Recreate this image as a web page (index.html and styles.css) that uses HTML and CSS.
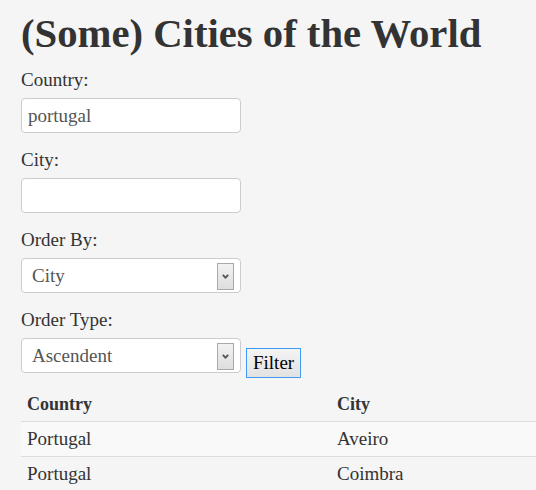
FILE: index.html
```html
<!DOCTYPE html>
<html lang="en">
<head>
<meta charset="utf-8">
<title>(Some) Cities of the World</title>
<link rel="stylesheet" href="styles.css">
</head>
<body>
<div class="page">
  <h1 class="title">(Some) Cities of the World</h1>
  <form class="filters">
    <div class="group">
      <label class="label" for="country">Country:</label>
      <input class="field" id="country" type="text" value="portugal">
    </div>
    <div class="group">
      <label class="label" for="city">City:</label>
      <input class="field" id="city" type="text" value="">
    </div>
    <div class="group">
      <label class="label" for="orderby">Order By:</label>
      <div class="select-wrap">
        <select class="select" id="orderby">
          <option>City</option>
          <option>Country</option>
        </select>
        <span class="arrow"><svg width="7" height="5" viewBox="0 0 7 5"><path d="M0.8 0.8 L3.5 3.6 L6.2 0.8" fill="none" stroke="#555" stroke-width="1.8"/></svg></span>
      </div>
    </div>
    <div class="group group-last">
      <label class="label" for="ordertype">Order Type:</label>
      <div class="inline-row">
        <div class="select-wrap">
          <select class="select" id="ordertype">
            <option>Ascendent</option>
            <option>Descendent</option>
          </select>
          <span class="arrow"><svg width="7" height="5" viewBox="0 0 7 5"><path d="M0.8 0.8 L3.5 3.6 L6.2 0.8" fill="none" stroke="#555" stroke-width="1.8"/></svg></span>
        </div>
        <button class="btn" type="button">Filter</button>
      </div>
    </div>
  </form>
  <table class="cities">
    <colgroup><col class="col-country"><col></colgroup>
    <thead>
      <tr><th>Country</th><th>City</th></tr>
    </thead>
    <tbody>
      <tr class="odd"><td>Portugal</td><td>Aveiro</td></tr>
      <tr><td>Portugal</td><td>Coimbra</td></tr>
    </tbody>
  </table>
</div>
</body>
</html>
```
FILE: styles.css
```css
html, body {
  margin: 0;
  padding: 0;
  background: #f5f5f5;
}
body {
  font-family: "Liberation Serif", "Times New Roman", serif;
  font-size: 19px;
  color: #333;
  overflow: hidden;
}
.page {
  padding: 0 0 0 21px;
}
.title {
  margin: 12px 0 12px;
  font-size: 40.7px;
  line-height: 44px;
  font-weight: bold;
  color: #333;
}
.filters {
  margin: 0;
}
.group {
  margin-bottom: 15px;
}
.group-last {
  margin-bottom: 8px;
}
.label {
  display: block;
  line-height: 24px;
  margin-bottom: 6px;
}
.field,
.select {
  display: block;
  box-sizing: border-box;
  width: 220px;
  height: 35px;
  margin: 0;
  border: 1px solid #ccc;
  border-radius: 4px;
  background: #fff;
  font-family: inherit;
  font-size: 19px;
  color: #555;
  outline: none;
}
.field {
  padding: 0 6px;
}
.select {
  -webkit-appearance: none;
  appearance: none;
  padding: 0 10px;
}
.select-wrap {
  position: relative;
  width: 220px;
}
.arrow {
  position: absolute;
  top: 5px;
  right: 7px;
  box-sizing: border-box;
  width: 17px;
  height: 27px;
  border: 1px solid #a9a9a9;
  background: linear-gradient(#f2f2f2, #dedede);
  display: flex;
  align-items: center;
  justify-content: center;
  pointer-events: none;
}
.arrow svg {
  display: block;
}
.inline-row {
  display: flex;
  align-items: flex-start;
  gap: 5px;
}
.btn {
  margin-top: 10px;
  box-sizing: border-box;
  height: 30px;
  padding: 0 6px;
  border: 1px solid #3d9bf5;
  border-radius: 0;
  background: linear-gradient(#f4f4f4, #e2e2e2);
  font-family: inherit;
  font-size: 19px;
  color: #000;
  line-height: 26px;
}
.cities {
  margin-top: 9px;
  width: 515px;
  border-collapse: collapse;
  table-layout: fixed;
}
.col-country {
  width: 310px;
}
.cities th,
.cities td {
  text-align: left;
  padding: 5px 6px;
  line-height: 24px;
}
.cities th {
  font-size: 18px;
  font-weight: bold;
}
.cities td {
  border-top: 1px solid #ddd;
}
.cities tr.odd td {
  background: #f9f9f9;
}
```
